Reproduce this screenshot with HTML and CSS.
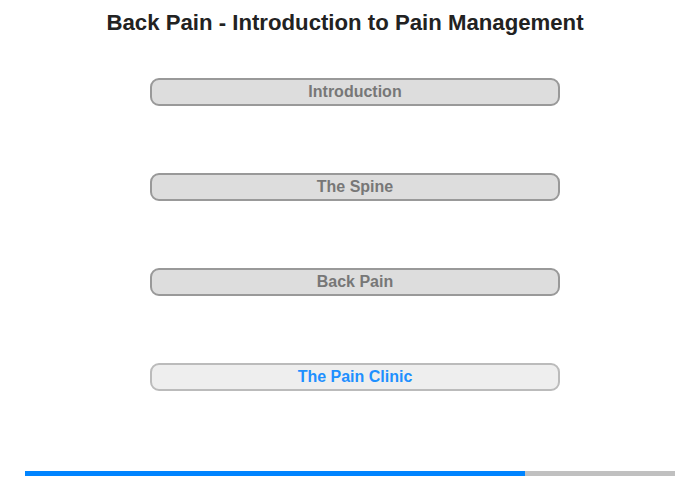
FILE: index.html
```html
<!DOCTYPE html>
<html lang="en">
<head>
    <meta charset="UTF-8">
    <meta name="viewport" content="width=device-width, initial-scale=1.0">
    <title>Back Pain - Introduction to Pain Management</title>
    <link rel="stylesheet" href="styles.css">
</head>
<body>
    <h1>Back Pain - Introduction to Pain Management</h1>
    <div class="chapters">
        <a class="chapter" href="#">Introduction</a>
        <a class="chapter" href="#">The Spine</a>
        <a class="chapter" href="#">Back Pain</a>
        <a class="chapter current" href="#">The Pain Clinic</a>
    </div>
    <div class="progress">
        <div class="progress-fill" style="width: 500px"></div>
    </div>
</body>
</html>
```

FILE: styles.css
```css
body {
    font-family: "Liberation Sans", Arial, sans-serif;
    background-color: #fff;
    color: #222;
    margin: 0;
    width: 700px;
    height: 480px;
    overflow: hidden;
}
h1 {
    font-size: 22.2px;
    line-height: 26px;
    margin: 0;
    padding: 10px 10px 0 0;
    text-align: center;
}
.chapters {
    display: flex;
    flex-direction: column;
    gap: 67px;
    margin: 42px 0 0 150px;
    width: 410px;
}
.chapter {
    display: block;
    box-sizing: border-box;
    height: 28px;
    line-height: 24px;
    border: 2px solid #999;
    border-radius: 9px;
    background-color: #ddd;
    color: #777;
    font-size: 16px;
    font-weight: bold;
    text-align: center;
    text-decoration: none;
}
.chapter.current {
    background-color: #eee;
    border-color: #bbb;
    color: #1e90ff;
}
.progress {
    margin: 80px 0 0 25px;
    width: 650px;
    height: 5px;
    background-color: #c0c0c0;
}
.progress-fill {
    height: 100%;
    background-color: #0084ff;
}
```
